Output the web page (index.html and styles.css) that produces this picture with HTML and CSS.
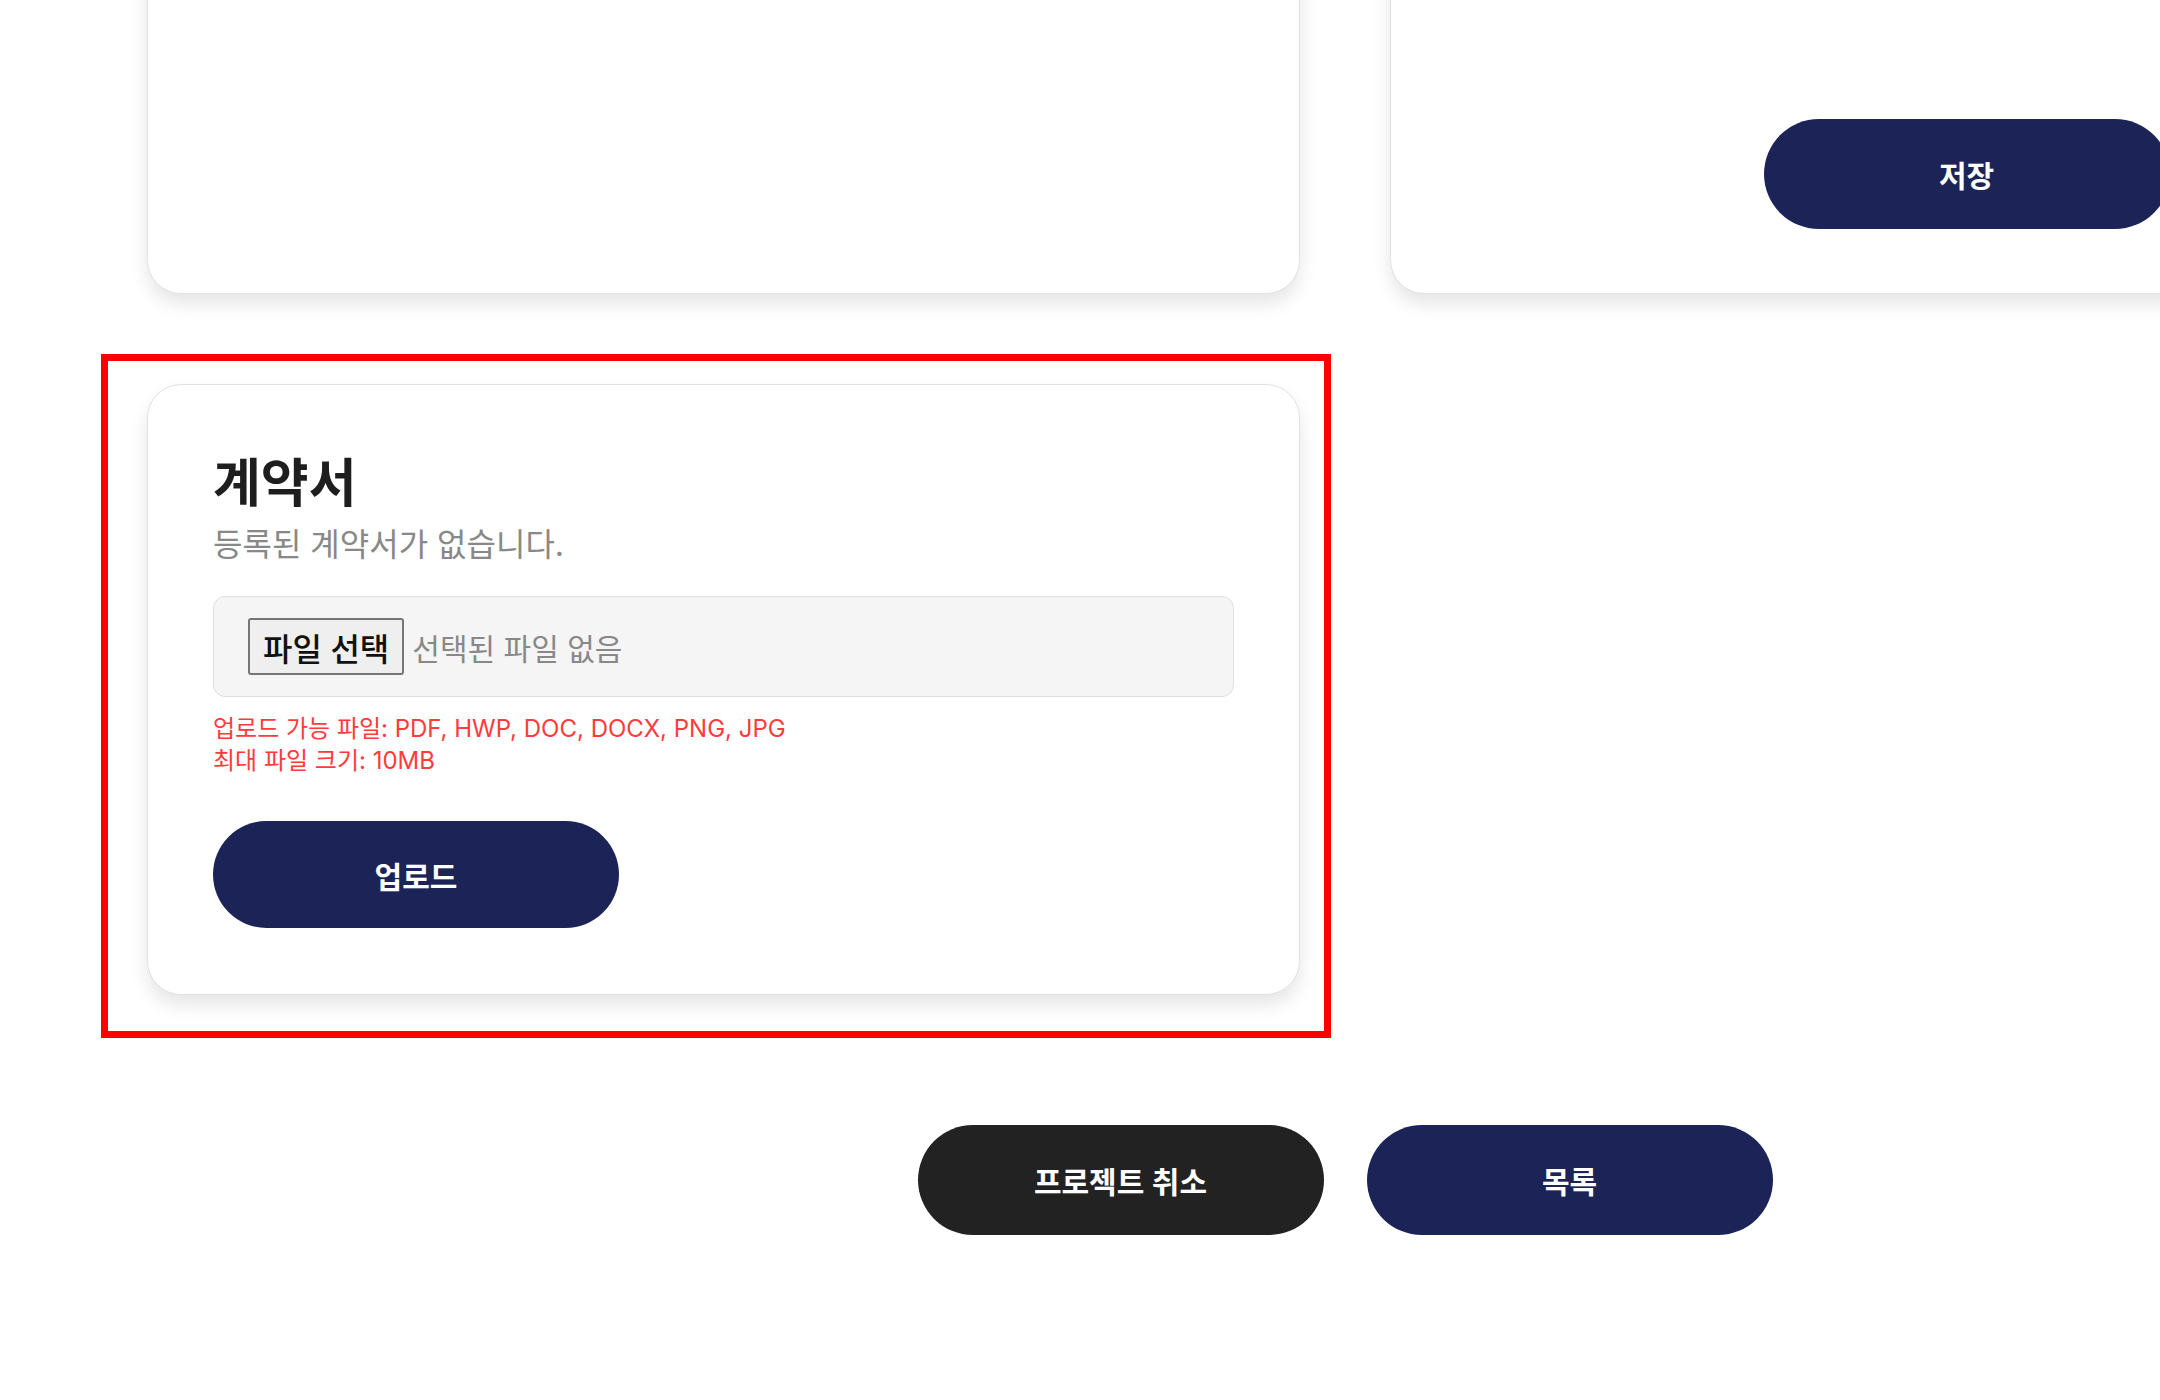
FILE: index.html
```html
<!DOCTYPE html>
<html lang="ko">
<head>
<meta charset="utf-8">
<title>계약서</title>
<link rel="stylesheet" href="styles.css">
</head>
<body>
<div class="page">
  <div class="grid">
    <section class="card card-top"></section>
    <section class="card card-top card-save">
      <button class="btn btn-navy" type="button">저장</button>
    </section>
    <div class="card-wrap">
      <section class="card card-contract">
        <h2 class="card-title">계약서</h2>
        <p class="card-sub">등록된 계약서가 없습니다.</p>
        <div class="file-box">
          <span class="file-btn">파일 선택</span>
          <span class="file-name">선택된 파일 없음</span>
        </div>
        <p class="file-hint">업로드 가능 파일: PDF, HWP, DOC, DOCX, PNG, JPG<br>최대 파일 크기: 10MB</p>
        <button class="btn btn-navy" type="button">업로드</button>
      </section>
      <span class="highlight"></span>
    </div>
  </div>
  <div class="actions">
    <button class="btn btn-dark" type="button">프로젝트 취소</button>
    <button class="btn btn-navy" type="button">목록</button>
  </div>
</div>
</body>
</html>
```

FILE: styles.css
```css
html, body {
  margin: 0;
  padding: 0;
  background: #ffffff;
  overflow: hidden;
}

body {
  width: 2160px;
  height: 1400px;
  font-family: "Inter", "Noto Sans CJK KR", sans-serif;
  color: #222222;
}

.page {
  width: 2396px;
  margin-left: 147px;
  margin-top: -306px;
}

.grid {
  display: grid;
  grid-template-columns: 1153px 1153px;
  column-gap: 90px;
  row-gap: 90px;
}

.card {
  box-sizing: border-box;
  background: #ffffff;
  border: 1px solid #e2e2e2;
  border-radius: 34px;
  box-shadow: 0 10px 18px rgba(0, 0, 0, 0.10);
}

.card-top {
  height: 600px;
}

.card-save {
  display: flex;
  flex-direction: column;
  justify-content: flex-end;
  align-items: center;
  padding-bottom: 64px;
}

.card-wrap {
  position: relative;
}

.card-contract {
  padding: 65px 65px 66px 65px;
  display: flex;
  flex-direction: column;
  align-items: flex-start;
}

.highlight {
  position: absolute;
  left: -46px;
  top: -30px;
  right: -31px;
  bottom: -43px;
  border: 7px solid #ff0000;
  pointer-events: none;
}

.card-title {
  margin: 3px 0 0 0;
  font-size: 52px;
  line-height: 62px;
  font-weight: 700;
  letter-spacing: 0;
  color: #1e1e1e;
}

.card-sub {
  margin: 10px 0 0 0;
  font-size: 32px;
  line-height: 40px;
  letter-spacing: 0;
  color: #888888;
}

.file-box {
  box-sizing: border-box;
  width: 100%;
  height: 101px;
  margin-top: 31px;
  padding: 0 34px;
  display: flex;
  align-items: center;
  gap: 8px;
  background: #f5f5f5;
  border: 1px solid #e0e0e0;
  border-radius: 12px;
}

.file-btn {
  box-sizing: border-box;
  height: 57px;
  padding: 0 13px;
  display: flex;
  align-items: center;
  background: #efefef;
  border: 2px solid #767676;
  border-radius: 3px;
  font-size: 32px;
  font-weight: 500;
  letter-spacing: 0;
  color: #111111;
}

.file-name {
  font-size: 30px;
  letter-spacing: 0;
  color: #888888;
}

.file-hint {
  margin: 16px 0 0 0;
  font-size: 24px;
  line-height: 32px;
  letter-spacing: 0;
  color: #ff3b3b;
}

.btn {
  box-sizing: border-box;
  width: 406px;
  height: 110px;
  border: none;
  border-radius: 55px;
  font-family: "Inter", "Noto Sans CJK KR", sans-serif;
  font-size: 30px;
  font-weight: 600;
  letter-spacing: 0;
  color: #ffffff;
  cursor: pointer;
}

.card-contract .btn {
  margin-top: 44px;
  height: 107px;
}

.btn-navy {
  background: #1c2457;
}

.btn-dark {
  background: #222222;
}

.actions {
  display: flex;
  justify-content: center;
  gap: 43px;
  margin-top: 130px;
}
```
